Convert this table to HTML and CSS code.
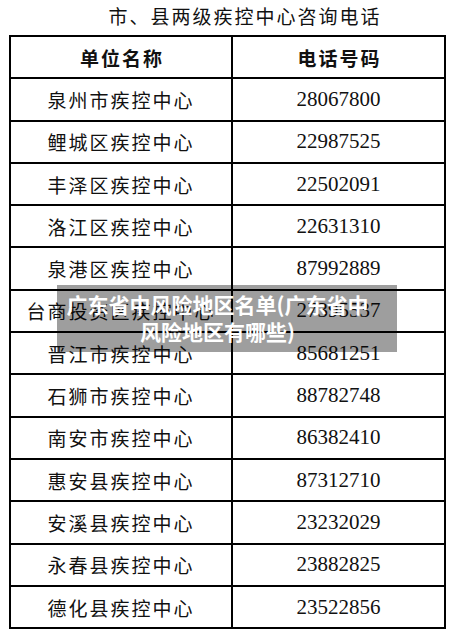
FILE: index.html
```html
<!DOCTYPE html>
<html lang="zh-CN">
<head>
<meta charset="utf-8">
<title>广东省中风险地区名单</title>
<link rel="stylesheet" href="styles.css">
</head>
<body>
<div class="page">
  <h1 class="title">市、县两级疾控中心咨询电话</h1>
  <table class="phones">
    <thead>
      <tr><th>单位名称</th><th>电话号码</th></tr>
    </thead>
    <tbody>
      <tr><td class="name">泉州市疾控中心</td><td class="num">28067800</td></tr>
      <tr><td class="name">鲤城区疾控中心</td><td class="num">22987525</td></tr>
      <tr><td class="name">丰泽区疾控中心</td><td class="num">22502091</td></tr>
      <tr><td class="name">洛江区疾控中心</td><td class="num">22631310</td></tr>
      <tr><td class="name">泉港区疾控中心</td><td class="num">87992889</td></tr>
      <tr><td class="name">台商投资区疾控中心</td><td class="num">27395537</td></tr>
      <tr><td class="name">晋江市疾控中心</td><td class="num">85681251</td></tr>
      <tr><td class="name">石狮市疾控中心</td><td class="num">88782748</td></tr>
      <tr><td class="name">南安市疾控中心</td><td class="num">86382410</td></tr>
      <tr><td class="name">惠安县疾控中心</td><td class="num">87312710</td></tr>
      <tr><td class="name">安溪县疾控中心</td><td class="num">23232029</td></tr>
      <tr><td class="name">永春县疾控中心</td><td class="num">23882825</td></tr>
      <tr><td class="name">德化县疾控中心</td><td class="num">23522856</td></tr>
    </tbody>
  </table>
  <div class="caption">广东省中风险地区名单(广东省中风险地区有哪些)</div>
</div>
</body>
</html>
```
FILE: styles.css
```css
html, body {
  margin: 0;
  padding: 0;
  background: #ffffff;
}
.page {
  position: relative;
  width: 455px;
  height: 637px;
  overflow: hidden;
  font-family: "Noto Sans CJK SC", "Noto Sans", sans-serif;
  color: #111111;
}
.title {
  margin: 0;
  height: 35px;
  line-height: 32px;
  padding-left: 35px;
  text-align: center;
  font-size: 19px;
  font-weight: normal;
  letter-spacing: 2px;
}
.phones {
  margin-left: 9px;
  width: 437px;
  border-collapse: collapse;
  table-layout: fixed;
}
.phones th,
.phones td {
  border: 2px solid #000;
  height: 40.3px;
  padding: 0;
  text-align: center;
  vertical-align: middle;
}
.phones th:first-child,
.phones td:first-child {
  width: 218px;
}
.phones th {
  font-size: 19px;
  font-weight: bold;
  letter-spacing: 2px;
  padding-left: 2px;
}
.name {
  font-size: 19px;
  letter-spacing: 2px;
  padding-left: 2px;
}
.num {
  font-family: "Liberation Serif", "Times New Roman", serif;
  font-size: 21px;
}
.caption {
  position: absolute;
  left: 57px;
  top: 285px;
  width: 340px;
  height: 67px;
  box-sizing: border-box;
  padding: 6px 27px 0 8px;
  background: rgba(0, 0, 0, 0.38);
  color: #ffffff;
  font-size: 21px;
  font-weight: bold;
  line-height: 27px;
  text-align: center;
}
```
